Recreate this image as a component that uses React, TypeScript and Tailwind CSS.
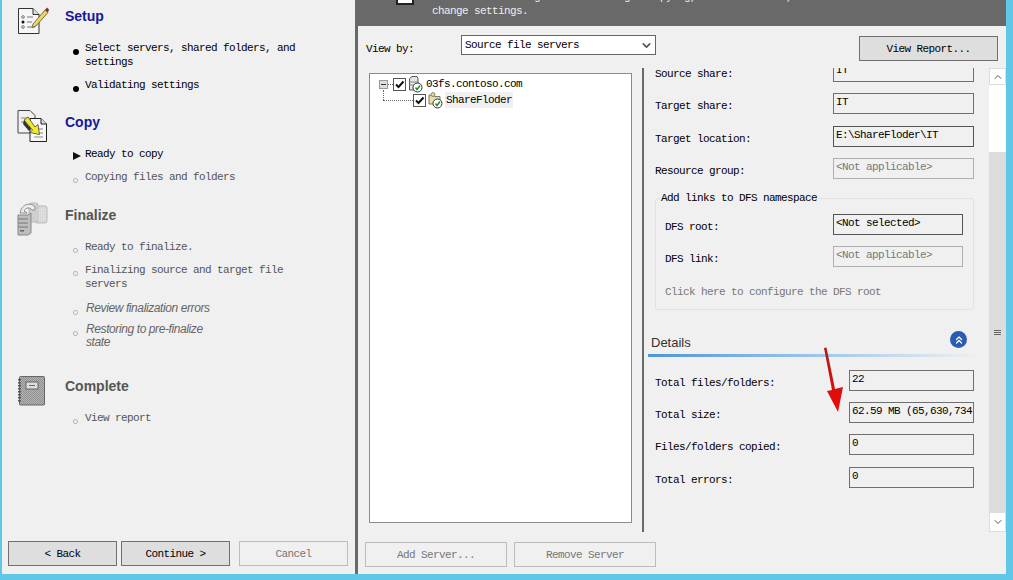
import { ChevronDown, ChevronUp, ChevronsUp } from 'lucide-react';
import type { ReactNode } from 'react';

// Wizard step icons
function SetupIcon() {
  return (
    <svg width="32" height="30" viewBox="0 0 32 30" className="block">
      <path d="M1.5 2.5H16L22 8.500V27.500H1.500Z" fill="#f6f6f6" stroke="#333" />
      <path d="M16 2.500V8.500H22" fill="#ddd" stroke="#333" />
      <circle cx="6" cy="11" r="1.300" fill="none" stroke="#777" />
      <circle cx="6" cy="16" r="1.500" fill="#111" />
      <circle cx="6" cy="21" r="1.300" fill="none" stroke="#777" />
      <path d="M10 11H16M10 16H15M10 21H18" stroke="#777" />
      <path d="M16 18L28 4L31 6.500L19 20L15 21.500Z" fill="#ecd75a" stroke="#554" strokeWidth="0.800" />
      <path d="M28 4L30 1.500L32 3.500L31 6.500Z" fill="#9c2230" />
    </svg>
  );
}

function CopyIcon() {
  return (
    <svg width="32" height="34" viewBox="0 0 32 34" className="block">
      <path d="M1 1.500H13L18 6.500V24H1Z" fill="#f1f1f1" stroke="#444" />
      <path d="M13 9.500H24L29.500 15V32.500H13Z" fill="#f8f8f8" stroke="#222" />
      <path d="M24 9.500V15H29.500" fill="#ddd" stroke="#222" />
      <path d="M4 9H12M4 13H8M17 20H26M17 24H26M17 28H26" stroke="#888" />
      <path d="M7 11L11 8L18 18L21 15.500L22.500 25.500L13 23.500L15.500 21Z" fill="#f2e92c" stroke="#444" strokeWidth="0.800" />
      <path d="M7 11L6 15L12 22L14 20Z" fill="#333" />
    </svg>
  );
}

function FinalizeIcon() {
  return (
    <svg width="32" height="34" viewBox="0 0 32 34" className="block">
      <rect x="18" y="4" width="12" height="17" rx="2" fill="#d8d8d8" stroke="#bbb" />
      <rect x="12" y="1" width="9" height="19" rx="2" fill="#cfcfcf" stroke="#bbb" />
      <path d="M20 8H29M20 11H29M20 14H29M20 17H29" stroke="#eee" strokeDasharray="1 1" />
      <path d="M4 8C6 2 14 0 18 5L18 8L15 8C13 5 9 5 7 9L10 11H3Z" fill="#eee" stroke="#777" strokeWidth="0.800" />
      <path d="M1 13H11L14 11V31L11 33H1Z" fill="#bdbdbd" stroke="#888" />
      <path d="M1 17H11M1 21H11M1 25H11" stroke="#777" />
      <rect x="3" y="28" width="4" height="1.500" fill="#666" />
    </svg>
  );
}

function CompleteIcon() {
  return (
    <svg width="28" height="30" viewBox="0 0 28 30" className="block">
      <defs>
        <pattern id="dither" width="2" height="2" patternUnits="userSpaceOnUse">
          <rect width="2" height="2" fill="#8f8f8f" />
          <rect width="1" height="1" fill="#b5b5b5" />
          <rect x="1" y="1" width="1" height="1" fill="#b5b5b5" />
        </pattern>
      </defs>
      <rect x="2.500" y="0.500" width="25" height="28.500" rx="1" fill="url(#dither)" stroke="#666" />
      <path d="M2.500 3V27" stroke="#555" strokeWidth="3" strokeDasharray="1.500 1.500" />
      <rect x="9" y="6" width="12" height="7" fill="#ddd" stroke="#666" />
      <path d="M12 9.500H18" stroke="#666" />
    </svg>
  );
}

function ServerStatusIcon() {
  return (
    <svg width="15" height="17" viewBox="0 0 15 17" className="block">
      <path d="M1.500 2.500L4 0.500H9L10 2.500V14H1.500Z" fill="#e4e4e4" stroke="#555" />
      <path d="M1.500 6H10M1.500 9H10" stroke="#888" />
      <circle cx="9.500" cy="11.500" r="4.500" fill="#fff" stroke="#333" />
      <path d="M7.500 11.500L9 13.500L12 9.500" fill="none" stroke="#1c8a2e" strokeWidth="1.400" />
    </svg>
  );
}

function FolderStatusIcon() {
  return (
    <svg width="15" height="17" viewBox="0 0 15 17" className="block">
      <path d="M1 3H5L6.500 4.500H12V12H1Z" fill="#ecdf9c" stroke="#777" />
      <circle cx="5" cy="2.500" r="2" fill="#e2d28a" stroke="#888" />
      <circle cx="9.500" cy="11.500" r="4.500" fill="#fff" stroke="#333" />
      <path d="M7.500 11.500L9 13.500L12 9.500" fill="none" stroke="#1c8a2e" strokeWidth="1.400" />
    </svg>
  );
}

function Check() {
  return (
    <span className="flex h-[13px] w-[13px] shrink-0 items-center justify-center border border-[#555] bg-white">
      <svg width="11" height="11" viewBox="0 0 11 11">
        <path d="M2 5.500L4.500 8L9.500 2.500" fill="none" stroke="#111" strokeWidth="2" />
      </svg>
    </span>
  );
}

type Marker = 'done' | 'current' | 'pending';

function StepMarker({ kind }: { kind: Marker }) {
  if (kind === 'done') return <span className="mt-[8px] block h-[6px] w-[6px] rounded-full bg-black" />;
  if (kind === 'current') {
    return (
      <svg width="8" height="8" viewBox="0 0 8 8" className="mt-[5px] block">
        <path d="M0 0L8 4L0 8Z" fill="#111" />
      </svg>
    );
  }
  return <span className="mt-[8px] block h-[5px] w-[5px] rounded-[2px] border border-[#bbb]" />;
}

function StepItem({ kind, italic, children, className }: { kind: Marker; italic?: boolean; children: ReactNode; className: string }) {
  return (
    <div className={`flex ${className}`}>
      <div className="w-[14px] shrink-0 pl-[2px]">
        <StepMarker kind={kind} />
      </div>
      {italic ? (
        <div className="pl-[1px] font-['Liberation_Sans',sans-serif] text-[12px] leading-[13px] italic tracking-[-0.4px] text-[#666]">{children}</div>
      ) : (
        <div className={`leading-[14px] ${kind === 'pending' ? 'text-[#555]' : 'text-black'}`}>{children}</div>
      )}
    </div>
  );
}

function StepHeading({ icon, title, active, titleOffset, className }: { icon: ReactNode; title: string; active?: boolean; titleOffset: string; className: string }) {
  return (
    <div className={`flex items-start ${className}`}>
      <div className="w-[48px] shrink-0">{icon}</div>
      <h2 className={`font-['Liberation_Sans',sans-serif] text-[14px] leading-[16px] font-bold tracking-normal ${titleOffset} ${active ? 'text-[#17179a]' : 'text-[#555]'}`}>
        {title}
      </h2>
    </div>
  );
}

function WizardButton({ children, disabled, className }: { children: ReactNode; disabled?: boolean; className: string }) {
  return (
    <button
      className={`h-[25px] border pt-[2px] leading-none ${
        disabled ? 'border-[#bcbcbc] bg-[#f0f0f0] text-[#777]' : 'border-[#707070] bg-[#dedede] text-black'
      } ${className}`}
    >
      {children}
    </button>
  );
}

function Field({ label, value, state, inputWidth, className }: {
  label: string;
  value: string;
  state?: 'readonly' | 'disabled' | 'active';
  inputWidth: string;
  className?: string;
}) {
  const box =
    state === 'disabled'
      ? 'border-[#b0b0b0] text-[#777]'
      : state === 'active'
        ? 'border-[#555] text-black'
        : 'border-[#707070] text-black';
  return (
    <div className={`flex h-[21px] items-start justify-between ${className ?? ''}`}>
      <span className="mt-[6px] leading-[14px] text-black">{label}</span>
      <div className={`h-[21px] overflow-hidden whitespace-nowrap border pt-[1px] pl-[2px] leading-[14px] ${box} ${inputWidth}`}>{value}</div>
    </div>
  );
}

export default function App() {
  return (
    <div className="relative flex h-[580px] w-[1013px] overflow-hidden bg-[#62c6e8] pr-[7px] pb-[6px] pl-[2px] font-['Liberation_Mono',monospace] text-[11px] tracking-[-0.6px]">
      {/* Left: wizard steps */}
      <aside className="flex w-[353px] shrink-0 flex-col bg-[#f0f0f0] pl-[15px]">
        <StepHeading icon={<SetupIcon />} title="Setup" active titleOffset="mt-[2px]" className="mt-[6px] h-[30px]" />
        <div className="pl-[54px]">
          <StepItem kind="done" className="mt-[5px]">
            Select servers, shared folders, and
            <br />
            settings
          </StepItem>
          <StepItem kind="done" className="mt-[9px]">Validating settings</StepItem>
        </div>

        <StepHeading icon={<CopyIcon />} title="Copy" active titleOffset="mt-[5px]" className="mt-[17px] h-[40px]" />
        <div className="pl-[54px]">
          <StepItem kind="current" className="mt-[-2px]">Ready to copy</StepItem>
          <StepItem kind="pending" className="mt-[9px]">Copying files and folders</StepItem>
        </div>

        <StepHeading icon={<FinalizeIcon />} title="Finalize" titleOffset="mt-[5px]" className="mt-[18px] h-[39px]" />
        <div className="pl-[54px]">
          <StepItem kind="pending" className="mt-[-1px]">Ready to finalize.</StepItem>
          <StepItem kind="pending" className="mt-[9px]">
            Finalizing source and target file
            <br />
            servers
          </StepItem>
          <StepItem kind="pending" italic className="mt-[11px]">Review finalization errors</StepItem>
          <StepItem kind="pending" italic className="mt-[8px]">
            Restoring to pre-finalize
            <br />
            state
          </StepItem>
        </div>

        <StepHeading icon={<CompleteIcon />} title="Complete" titleOffset="mt-[2px]" className="mt-[27px] h-[30px]" />
        <div className="pl-[54px]">
          <StepItem kind="pending" className="mt-[5px]">View report</StepItem>
        </div>

        <div className="mt-auto mb-[8px] -ml-[9px] flex">
          <WizardButton className="w-[109px]">&lt; Back</WizardButton>
          <WizardButton className="ml-[4px] w-[109px]">Continue &gt;</WizardButton>
          <WizardButton disabled className="ml-[9px] w-[109px]">Cancel</WizardButton>
        </div>
      </aside>

      {/* Right: server view */}
      <main className="flex min-w-0 flex-1 flex-col border-l-[3px] border-[#696969] bg-[#f0f0f0]">
        <header className="flex h-[26px] shrink-0 overflow-hidden bg-[#696969] pl-[38px] text-white">
          <div className="-mt-[3px] h-[8px] w-[18px] border-2 border-[#222] bg-white" />
          <div className="-mt-[10px] ml-[18px] leading-[14px] whitespace-nowrap text-[#eee]">
            <div>Review the settings below. To begin copying, click Continue, or click Back to</div>
            <div>change settings.</div>
          </div>
        </header>

        <div className="flex h-[42px] shrink-0 items-start">
          <span className="mt-[16px] ml-[8px] w-[95px] leading-[14px] text-black">View by:</span>
          <div className="mt-[9px] flex h-[20px] w-[195px] items-center justify-between border border-[#666] bg-white pt-[1px] pr-[2px] pl-[3px] leading-none text-black">
            Source file servers
            <ChevronDown size={13} strokeWidth={3} className="text-[#555]" />
          </div>
          <button className="mt-[10px] ml-[203px] h-[25px] w-[139px] border border-[#707070] bg-[#dedede] pt-[1px] leading-none text-black">View Report...</button>
        </div>

        <div className="flex h-[464px] shrink-0">
          {/* Tree */}
          <div className="mt-[5px] ml-[11px] h-[450px] w-[263px] shrink-0 border border-[#8c8c8c] bg-white text-black">
            <div className="mt-[3px] flex h-[14px] items-center pl-[9px]">
              <span className="flex h-[9px] w-[9px] items-center justify-center border border-[#999] bg-[#ddd]">
                <span className="h-[1px] w-[5px] bg-[#333]" />
              </span>
              <span className="w-[5px] border-t border-dotted border-[#666]" />
              <Check />
              <span className="ml-[2px]"><ServerStatusIcon /></span>
              <span className="ml-[3px] leading-none">03fs.contoso.com</span>
            </div>
            <div className="mt-[1px] flex h-[16px] items-center pl-[13px]">
              <span className="-mt-[10px] h-[10px] w-[1px] border-l border-dotted border-[#666]" />
              <span className="ml-[-1px] w-[30px] border-t border-dotted border-[#666]" />
              <Check />
              <span className="ml-[2px]"><FolderStatusIcon /></span>
              <span className="ml-[2px] bg-[#f0f0f0] px-[1px] leading-[16px]">ShareFloder</span>
            </div>
          </div>

          <div className="ml-[10px] w-[2px] shrink-0 bg-[#696969]" />

          {/* Details pane */}
          <div className="relative h-full min-w-0 flex-1 overflow-hidden">
            <div className="-mt-[7px] pr-[15px] pl-[11px]">
              <Field label="Source share:" value="IT" inputWidth="w-[141px]" />
              <Field label="Target share:" value="IT" inputWidth="w-[141px]" className="mt-[11px]" />
              <Field label="Target location:" value="E:\ShareFloder\IT" state="active" inputWidth="w-[141px]" className="mt-[12px]" />
              <Field label="Resource group:" value="<Not applicable>" state="disabled" inputWidth="w-[141px]" className="mt-[11px]" />

              <fieldset className="mt-[12px] h-[119px] rounded-[3px] border border-[#e2e2e2] pr-[10px] pl-[9px]">
                <legend className="ml-[-5px] px-[1px] leading-[14px] text-black">Add links to DFS namespace</legend>
                <Field label="DFS root:" value="<Not selected>" state="active" inputWidth="w-[130px]" className="mt-[9px]" />
                <Field label="DFS link:" value="<Not applicable>" state="disabled" inputWidth="w-[130px]" className="mt-[11px]" />
                <div className="mt-[18px] leading-[14px] text-[#777]">Click here to configure the DFS root</div>
              </fieldset>
            </div>

            <div className="mt-[21px] flex items-start justify-between pr-[22px] pl-[7px]">
              <h3 className="mt-[4px] font-['Liberation_Sans',sans-serif] text-[13px] leading-[16px] tracking-normal text-[#333]">Details</h3>
              <span className="flex h-[17px] w-[17px] items-center justify-center rounded-full bg-[#2a5cb0] text-white">
                <ChevronsUp size={12} strokeWidth={2.500} />
              </span>
            </div>
            <div className="mt-[3px] ml-[4px] h-[3px] w-[332px] bg-gradient-to-r from-[#4f94d8] via-[#9cc6ea] to-[#f0f0f0]" />

            <div className="mt-[13px] pr-[15px] pl-[11px]">
              <Field label="Total files/folders:" value="22" inputWidth="w-[125px]" />
              <Field label="Total size:" value="62.59 MB (65,630,734" inputWidth="w-[125px]" className="mt-[11px]" />
              <Field label="Files/folders copied:" value="0" inputWidth="w-[125px]" className="mt-[11px]" />
              <Field label="Total errors:" value="0" inputWidth="w-[125px]" className="mt-[12px]" />
            </div>
          </div>

          {/* Scrollbar */}
          <div className="flex w-[17px] shrink-0 flex-col bg-white">
            <div className="flex h-[17px] items-center justify-center border border-[#ddd] text-[#555]">
              <ChevronUp size={12} />
            </div>
            <div className="h-[67px]" />
            <div className="flex flex-1 items-center justify-center bg-[#dcdcdc]">
              <div className="flex flex-col gap-[1px]">
                <span className="h-[1px] w-[7px] bg-[#666]" />
                <span className="h-[1px] w-[7px] bg-[#666]" />
                <span className="h-[1px] w-[7px] bg-[#666]" />
              </div>
            </div>
            <div className="flex h-[20px] items-center justify-center border border-[#ddd] text-[#555]">
              <ChevronDown size={12} />
            </div>
          </div>
        </div>

        <div className="mt-[10px] ml-[7px] flex gap-[7px]">
          <WizardButton disabled className="w-[142px]">Add Server...</WizardButton>
          <WizardButton disabled className="w-[142px]">Remove Server</WizardButton>
        </div>
      </main>

      {/* Red annotation arrow laid over the screenshot */}
      <svg width="30" height="72" viewBox="0 0 30 72" className="absolute top-[345px] left-[820px]">
        <defs>
          <linearGradient id="arrowHead" x1="0" y1="0" x2="0" y2="1">
            <stop offset="0" stopColor="#b01a1a" />
            <stop offset="1" stopColor="#f00808" />
          </linearGradient>
        </defs>
        <path d="M4 3L6.500 2.500L15 44L23 42L18 67L7 46L12 45Z" fill="url(#arrowHead)" />
      </svg>
    </div>
  );
}
